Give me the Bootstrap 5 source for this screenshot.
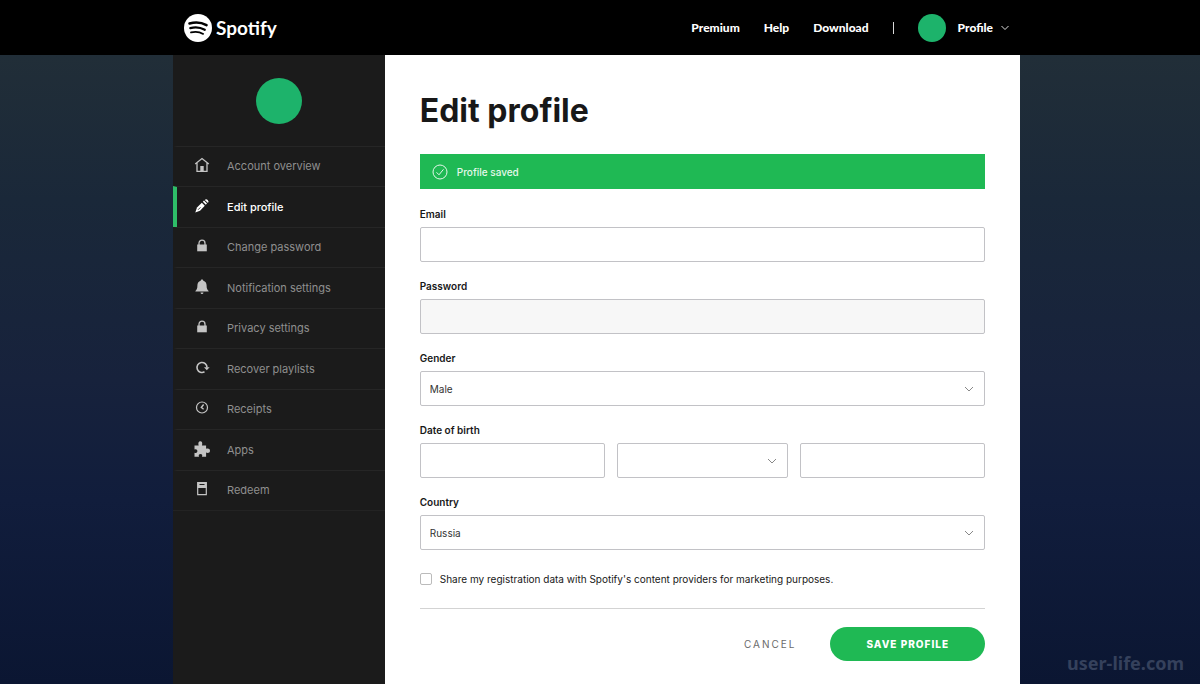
<!DOCTYPE html>
<html lang="en">
<head>
<meta charset="utf-8">
<meta name="viewport" content="width=device-width, initial-scale=1">
<title>Edit profile - Spotify</title>
<link href="https://cdn.jsdelivr.net/npm/bootstrap@5.3.0/dist/css/bootstrap.min.css" rel="stylesheet">
<style>
  :root { --sp-green: #1fb954; --sp-avatar: #1db36b; --sp-line: #c2c2c6; --gutter: 7px; }
  body { font-family: Inter, "Liberation Sans", sans-serif; font-size: 10px; line-height: 16px; color: #181818;
    background: linear-gradient(#212e38 56px, #1a2839 200px, #17223c 380px, #111d3c 500px, #0b1632 100%); }
  .site-header { background: #000; min-height: 55px; font-family: Lato, "Liberation Sans", sans-serif; font-size: 12px; font-weight: 900; }
  .site-header, .page-body { padding-right: var(--gutter); }
  .shell { width: 100%; max-width: 847px; }
  .site-header .shell { padding: 0 11px; }
  .site-header a { color: #fff; text-decoration: none; }
  .wordmark { font-family: Lato, sans-serif; font-size: 19px; line-height: 28px; font-weight: 700; }
  .top-links { gap: 24px; }
  .divider { width: 1px; height: 12px; background: #d8d8d8; }
  .avatar { width: 28px; height: 28px; background: var(--sp-avatar); }
  .avatar-lg { width: 46px; height: 46px; }
  .side { background: #1b1b1b; }
  .side-avatar { padding: 23px 0 22px; }
  .side-nav .nav-link { height: 40px; padding: 0 0 1px 17px; gap: 13px; border-left: 4px solid transparent;
    border-top: 1px solid #262626; border-radius: 0; color: #8f8f8f; font-size: 11px; }
  .side-nav .nav-item:nth-child(even) .nav-link { height: 41px; }
  .side-nav .nav-item:last-child { border-bottom: 1px solid #232323; }
  .side-nav .nav-link.active { color: #fff; border-left-color: #2ebd68; font-weight: 500; }
  .side-nav svg { width: 16px; height: 16px; color: #c4c4c4; margin: 0 4px 2px 0; }
  .side-nav .active svg { color: #fff; }
  .panel { padding: 35px 35px 23px; }
  h1 { font-size: 32px; line-height: 42px; font-weight: 700; margin-bottom: 22px; }
  .saved { background: var(--sp-green); color: #e4f8ea; min-height: 35px; padding: 0 12px; gap: 9px; border-radius: 0; font-weight: 500; margin-bottom: 17px; }
  .fields { gap: 16px; }
  .form-label { font-size: 10px; line-height: 16px; font-weight: 600; margin-bottom: 5px; float: none; }
  .form-control, .form-select { height: 35px; font-size: 10px; line-height: 16px; padding: 0 9px; border: 1px solid var(--sp-line); border-radius: 2px; color: #333; }
  .form-control:disabled { background: #f7f7f7; }
  .form-select { padding-right: 30px; background-size: 10px 10px; background-position: right 10px center;
    background-image: url("data:image/svg+xml,%3Csvg xmlns='http://www.w3.org/2000/svg' viewBox='0 0 10 10'%3E%3Cpath d='M1 3l4 4 4-4' fill='none' stroke='%23888'/%3E%3C/svg%3E"); }
  .birth { display: grid; grid-template-columns: 185fr 171fr 185fr; gap: 12px; }
  .share { min-height: 16px; gap: 8px; margin: 21px 0; padding: 0; }
  .share .form-check-input { float: none; margin: 0; width: 12px; height: 12px; border-radius: 2px; border-color: #bbb; }
  .actions { border-top: 1px solid #d3d3d3; padding-top: 18px; gap: 34px; }
  .actions .btn { font-size: 10px; line-height: 16px; text-transform: uppercase; border: 0; }
  .actions .btn-cancel { color: #6a6a6a; padding: 0; letter-spacing: 2px; }
  .actions .btn-save { background: var(--sp-green); color: #fff; font-weight: 800; letter-spacing: 1px; height: 34px; padding: 0 36px; }
  .actions .btn-save:hover { background: #1ed760; color: #fff; }
  .watermark { right: 16px; bottom: 10px; font-family: "Noto Sans", sans-serif; font-size: 18px; line-height: 22px; font-weight: 700; color: #35415c; }
</style>
</head>
<body class="min-vh-100 d-flex flex-column position-relative">
<header class="site-header d-flex justify-content-center">
  <div class="shell d-flex align-items-center justify-content-between">
    <a href="#" class="d-flex align-items-center gap-1">
      <svg width="28" height="28" viewBox="0 0 28 28" aria-hidden="true"><circle cx="14" cy="14" r="14" fill="#fff"/><g fill="none" stroke="#000" stroke-linecap="round"><path d="M5.500 9.500c6-1.700 12-1.100 17 1.600" stroke-width="2.600"/><path d="M6.300 14.100c5-1.400 10-.9 14.500 1.700" stroke-width="2.200"/><path d="M7 18.400c4.200-1.100 8.500-.7 12.200 1.500" stroke-width="1.800"/></g></svg>
      <span class="wordmark">Spotify</span>
    </a>
    <nav class="top-links d-flex align-items-center" aria-label="Main">
      <a href="#">Premium</a>
      <a href="#">Help</a>
      <a href="#">Download</a>
      <span class="divider"></span>
      <a href="#" class="d-flex align-items-center">
        <span class="avatar rounded-circle me-2"></span><span class="ms-1 me-2">Profile</span>
        <svg width="8" height="8" viewBox="0 0 8 8" aria-hidden="true"><path d="M.5 2L4 5.500 7.500 2" fill="none" stroke="#ddd"/></svg>
      </a>
    </nav>
  </div>
</header>
<div class="page-body d-flex justify-content-center flex-grow-1">
<div class="shell row g-0">
  <aside class="side col-3">
    <div class="side-avatar d-flex justify-content-center"><span class="avatar avatar-lg rounded-circle"></span></div>
    <ul class="side-nav nav flex-column flex-nowrap">
      <li class="nav-item"><a href="#" class="nav-link d-flex align-items-center"><svg viewBox="0 0 16 16" fill="none" stroke="currentColor" stroke-width="1.300"><path d="M1.200 7L8 1.600 14.800 7M3 5.800v8.500h10V5.800"/><path d="M6.300 9h3.400v5H6.300z" fill="currentColor" stroke="none"/></svg>Account overview</a></li>
      <li class="nav-item"><a href="#" class="nav-link active d-flex align-items-center" aria-current="page"><svg viewBox="0 0 16 16" fill="currentColor"><path d="M1.300 14.500l1.700-5 4.800-4.800 3 3-4.800 5z"/><path d="M8.800 3.800l3 3 1.200-1.200-3-3z"/><path d="M10.800 1.900q1.400-1.300 2.900.2 1.600 1.500.3 2.900z"/><path d="M4 11.800l2.500-2.500" stroke="#1b1b1b" stroke-width=".8"/></svg>Edit profile</a></li>
      <li class="nav-item"><a href="#" class="nav-link d-flex align-items-center"><svg viewBox="0 0 16 16"><path d="M3.200 6.500h9.600v6.800H3.200z" fill="currentColor"/><path d="M5 7V5.200a3 3 0 0 1 6 0V7" fill="none" stroke="currentColor" stroke-width="1.300"/></svg>Change password</a></li>
      <li class="nav-item"><a href="#" class="nav-link d-flex align-items-center"><svg viewBox="0 0 16 16" fill="currentColor"><path d="M8 .5c.8 0 1.300.5 1.300 1.200 2.400.6 3.300 2.500 3.300 4.800 0 3 .6 4 2 5.500v.6H1.400V12c1.400-1.500 2-2.500 2-5.500 0-2.300.9-4.200 3.300-4.800C6.700 1 7.200.5 8 .5zM6.500 13.500h3q-.2 1.500-1.500 1.500t-1.500-1.500z"/></svg>Notification settings</a></li>
      <li class="nav-item"><a href="#" class="nav-link d-flex align-items-center"><svg viewBox="0 0 16 16"><path d="M3.200 6.500h9.600v6.800H3.200z" fill="currentColor"/><path d="M5 7V5.200a3 3 0 0 1 6 0V7" fill="none" stroke="currentColor" stroke-width="1.300"/></svg>Privacy settings</a></li>
      <li class="nav-item"><a href="#" class="nav-link d-flex align-items-center"><svg viewBox="0 0 16 16"><path d="M10.500 11.800A5 5 0 1 1 13 7.500" fill="none" stroke="currentColor" stroke-width="1.600"/><path d="M10 7.200h5.600l-2.800 3z" fill="currentColor"/></svg>Recover playlists</a></li>
      <li class="nav-item"><a href="#" class="nav-link d-flex align-items-center"><svg viewBox="0 0 16 16" fill="none" stroke="currentColor"><circle cx="8" cy="7.500" r="5.500" stroke-width="1.200"/><path d="M9.600 4.500L7.300 7.500l2.300 1.800" stroke-width="1.400"/></svg>Receipts</a></li>
      <li class="nav-item"><a href="#" class="nav-link d-flex align-items-center"><svg viewBox="0 0 16 16" fill="currentColor"><path d="M.5 4.500h4.200C3.800 2.200 4.600.2 6.300.2s2.500 2 1.600 4.300h4.200v3.300c2-.8 3.900 0 3.900 1.900s-1.900 2.700-3.900 1.900v4.100H8c.7-1.600 0-2.600-1.500-2.600S4.300 14.100 5 15.700H.5v-4c1.600.7 2.900 0 2.900-1.600S2.100 7.700.5 8.400z"/></svg>Apps</a></li>
      <li class="nav-item"><a href="#" class="nav-link d-flex align-items-center"><svg viewBox="0 0 16 16"><path d="M3.700 1.700h8.600v12H3.700z" fill="none" stroke="currentColor" stroke-width="1.200"/><path d="M3.500 1.500h9v5.500h-9z" fill="currentColor"/><path d="M5.500 3.500h5" stroke="#1b1b1b"/></svg>Redeem</a></li>
    </ul>
  </aside>
  <main class="panel col-9 bg-white">
    <h1>Edit profile</h1>
    <div class="saved d-flex align-items-center" role="status">
      <svg width="16" height="16" viewBox="0 0 16 16" fill="none" stroke="currentColor" aria-hidden="true"><circle cx="8" cy="8" r="7"/><path d="M4.500 8.300L7 10.800l4.500-5.500"/></svg>
      <span>Profile saved</span>
    </div>
    <form>
      <div class="fields d-flex flex-column">
        <div><label class="form-label d-block" for="email">Email</label><input class="form-control" type="email" id="email"></div>
        <div><label class="form-label d-block" for="password">Password</label><input class="form-control" type="password" id="password" disabled></div>
        <div><label class="form-label d-block" for="gender">Gender</label><select class="form-select" id="gender"><option>Male</option><option>Female</option></select></div>
        <fieldset>
          <legend class="form-label">Date of birth</legend>
          <div class="birth">
            <input class="form-control" type="text" aria-label="Day">
            <select class="form-select" aria-label="Month"><option></option></select>
            <input class="form-control" type="text" aria-label="Year">
          </div>
        </fieldset>
        <div><label class="form-label d-block" for="country">Country</label><select class="form-select" id="country"><option>Russia</option></select></div>
      </div>
      <div class="share form-check d-flex align-items-center">
        <input class="form-check-input" type="checkbox" id="share"><label for="share">Share my registration data with Spotify's content providers for marketing purposes.</label>
      </div>
      <div class="actions d-flex justify-content-end align-items-center">
        <button type="button" class="btn btn-cancel">Cancel</button>
        <button type="submit" class="btn btn-save rounded-pill">Save profile</button>
      </div>
    </form>
  </main>
</div>
</div>
<div class="watermark position-absolute">user-life.com</div>
<script src="https://cdn.jsdelivr.net/npm/bootstrap@5.3.0/dist/js/bootstrap.bundle.min.js"></script>
</body>
</html>
